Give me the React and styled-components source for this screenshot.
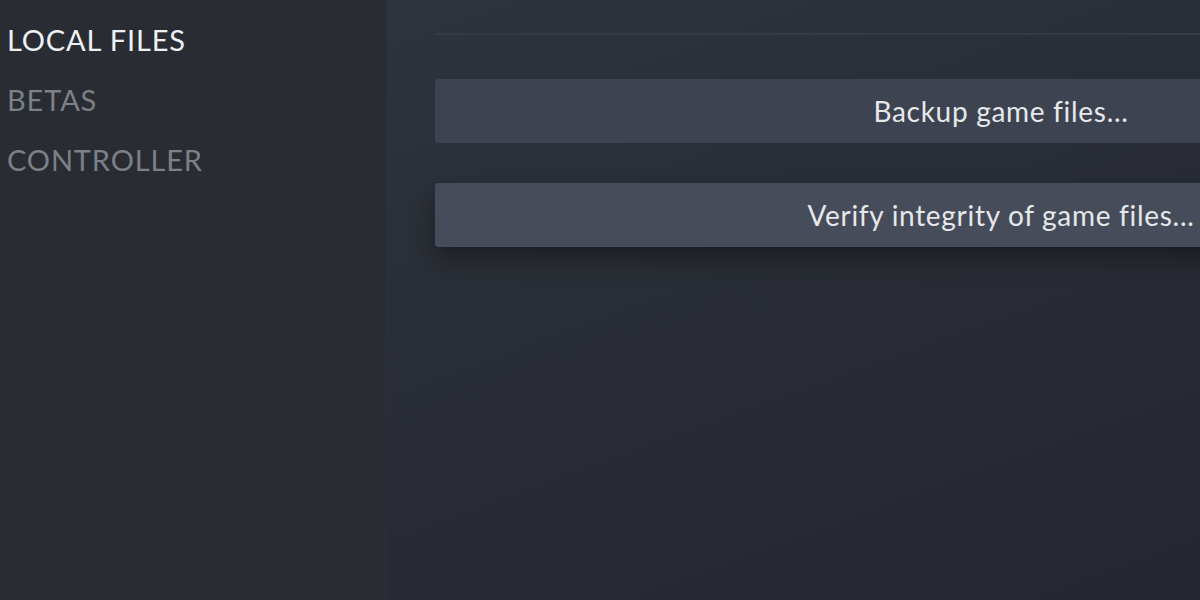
import React from 'react';
import styled, { createGlobalStyle } from 'styled-components';

const Global = createGlobalStyle`
  html, body {
    margin: 0;
    padding: 0;
    background: #282b32;
  }
  #root {
    height: 600px;
  }
`;

const Page = styled.div`
  display: flex;
  width: 1200px;
  height: 600px;
  overflow: hidden;
  font-family: Lato, "Noto Sans", sans-serif;
`;

const Sidebar = styled.nav`
  width: 387px;
  flex-shrink: 0;
  background: #292c33;
  border-right: 1px solid #2c3038;
  display: flex;
  flex-direction: column;
  gap: 23px;
  padding: 21px 0 0 7px;
  box-sizing: border-box;
`;

const NavItem = styled.div`
  font-size: 29px;
  line-height: 37px;
  letter-spacing: 0.85px;
  color: ${p => (p.active ? '#eef0f3' : '#7c8087')};
`;

const Main = styled.main`
  flex: 1;
  background: linear-gradient(160deg, #2f333b 0%, #2a2e36 35%, #24272f 100%);
  padding: 33px 0 0 48px;
  overflow: hidden;
  display: flex;
  flex-direction: column;
`;

const Divider = styled.div`
  width: 1200px;
  height: 2px;
  background: #363a43;
  margin-bottom: 44px;
  flex-shrink: 0;
`;

const Actions = styled.div`
  display: flex;
  flex-direction: column;
  gap: 40px;
`;

const Button = styled.button`
  width: 1132px;
  height: 64px;
  flex-shrink: 0;
  border: none;
  border-radius: 3px;
  background: ${p => (p.hover ? '#464c59' : '#3d4350')};
  box-shadow: ${p => (p.hover ? '0 12px 22px rgba(16, 18, 22, 0.5)' : 'none')};
  color: #e6e8ec;
  font-family: Lato, "Noto Sans", sans-serif;
  font-size: 28px;
  letter-spacing: 0.7px;
  text-align: center;
  padding: 0;
  cursor: pointer;
`;

export default function App() {
  return (
    <>
      <Global />
      <Page>
        <Sidebar>
          <NavItem active>LOCAL FILES</NavItem>
          <NavItem>BETAS</NavItem>
          <NavItem>CONTROLLER</NavItem>
        </Sidebar>
        <Main>
          <Divider />
          <Actions>
            <Button>Backup game files...</Button>
            <Button hover>Verify integrity of game files...</Button>
          </Actions>
        </Main>
      </Page>
    </>
  );
}
